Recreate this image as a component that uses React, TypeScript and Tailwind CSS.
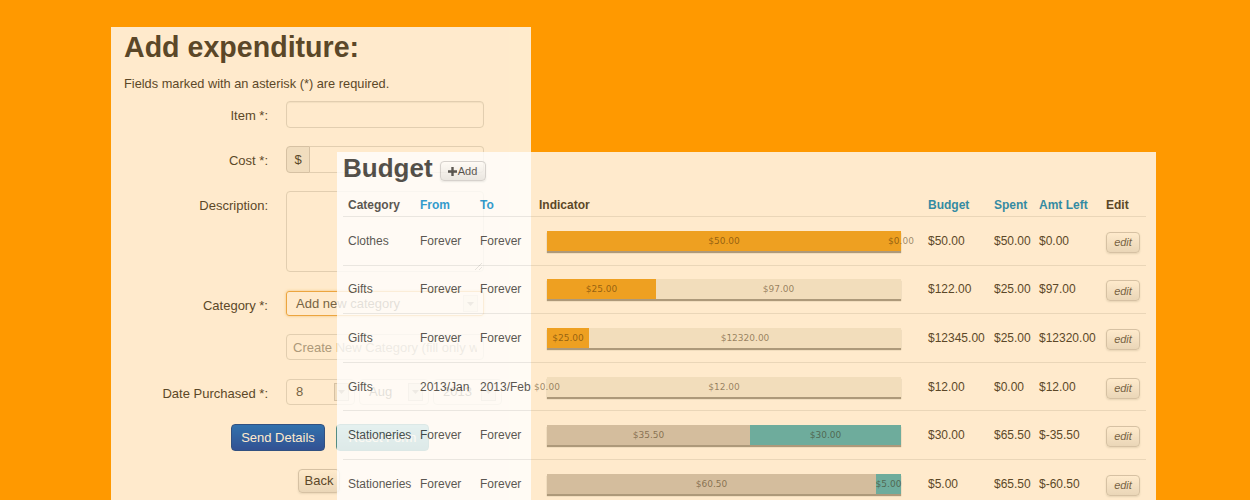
import React from 'react';

type Seg = { w: number; bg: string; label: string };

interface BudgetRow {
  cat: string;
  from: string;
  to: string;
  segs: Seg[];
  budget: string;
  spent: string;
  left: string;
}

const rows: BudgetRow[] = [
  {
    cat: 'Clothes', from: 'Forever', to: 'Forever',
    segs: [
      { w: 354, bg: 'bg-[#eba22a]', label: '$50.00' },
      { w: 0, bg: '', label: '$0.00' },
    ],
    budget: '$50.00', spent: '$50.00', left: '$0.00',
  },
  {
    cat: 'Gifts', from: 'Forever', to: 'Forever',
    segs: [
      { w: 109, bg: 'bg-[#eba22a]', label: '$25.00' },
      { w: 245, bg: '', label: '$97.00' },
    ],
    budget: '$122.00', spent: '$25.00', left: '$97.00',
  },
  {
    cat: 'Gifts', from: 'Forever', to: 'Forever',
    segs: [
      { w: 42, bg: 'bg-[#eba22a]', label: '$25.00' },
      { w: 312, bg: '', label: '$12320.00' },
    ],
    budget: '$12345.00', spent: '$25.00', left: '$12320.00',
  },
  {
    cat: 'Gifts', from: '2013/Jan', to: '2013/Feb',
    segs: [
      { w: 0, bg: '', label: '$0.00' },
      { w: 354, bg: '', label: '$12.00' },
    ],
    budget: '$12.00', spent: '$0.00', left: '$12.00',
  },
  {
    cat: 'Stationeries', from: 'Forever', to: 'Forever',
    segs: [
      { w: 203, bg: 'bg-[#cac7c5]', label: '$35.50' },
      { w: 151, bg: 'bg-[#4ab1c4]', label: '$30.00' },
    ],
    budget: '$30.00', spent: '$65.50', left: '$-35.50',
  },
  {
    cat: 'Stationeries', from: 'Forever', to: 'Forever',
    segs: [
      { w: 329, bg: 'bg-[#cac7c5]', label: '$60.50' },
      { w: 25, bg: 'bg-[#4ab1c4]', label: '$5.00' },
    ],
    budget: '$5.00', spent: '$65.50', left: '$-60.50',
  },
];

function Caret() {
  return (
    <svg width="7" height="4" viewBox="0 0 7 4">
      <path d="M0 0 L7 0 L3.5 4 Z" fill="#999" />
    </svg>
  );
}

function FakeSelect({ text, width }: { text: string; width: string }) {
  return (
    <div className={`${width} h-[26px] border border-[#dcdcdc] rounded-[4px] flex items-center justify-between pl-[9px] pr-[5px] text-[#555]`}>
      <span>{text}</span>
      <span className="w-[15px] h-[18px] bg-[#eee] border border-[#ccc] flex items-center justify-center">
        <Caret />
      </span>
    </div>
  );
}

function FormRow({ label, children, className = '' }: { label: string; children: React.ReactNode; className?: string }) {
  return (
    <div className={`flex items-start gap-[18px] ${className}`}>
      <label className="w-[144px] h-[27px] pt-[2px] flex items-center justify-end">{label}</label>
      {children}
    </div>
  );
}

function Bar({ segs }: { segs: Seg[] }) {
  return (
    <div className="ml-[8px] w-[354px] h-[20px] bg-[#f0eeea] flex shadow-[0_2px_1px_rgba(0,0,0,0.4)]">
      {segs.map((s, i) => (
        <div
          key={i}
          className={`relative h-full shrink-0 ${s.bg}`}
          style={{ width: s.w }}
        >
          <span className="absolute left-1/2 top-0 -translate-x-1/2 leading-[20px] whitespace-nowrap text-[9px] text-black/50 font-['DejaVu_Sans',sans-serif]">
            {s.label}
          </span>
        </div>
      ))}
    </div>
  );
}

const cols = ['w-[72px]', 'w-[60px]', 'w-[59px]', 'w-[389px]', 'w-[66px]', 'w-[45px]', 'w-[67px]', 'w-[45px]'];

export default function App() {
  return (
    <div className="relative w-[1250px] h-[500px] overflow-hidden bg-[#ff9900] font-['Liberation_Sans',Arial,sans-serif] text-[#333]">
      {/* expenditure form */}
      <div className="absolute left-[111px] top-[27px] w-[420px] h-[500px] bg-white opacity-80 px-[13px] pt-[2px] text-[13px]">
        <h2 className="text-[28.6px] leading-[36px] font-bold">Add expenditure:</h2>
        <p className="mt-[10px] leading-[18px] text-[12.8px]">Fields marked with an asterisk (*) are required.</p>

        <div className="mt-[8px] flex flex-col">
          <FormRow label="Item *:">
            <input className="w-[198px] h-[27px] border border-[#dcdcdc] rounded-[4px] shadow-[inset_0_1px_1px_rgba(0,0,0,0.06)]" />
          </FormRow>

          <FormRow label="Cost *:" className="mt-[18px]">
            <div className="flex">
              <span className="w-[24px] h-[27px] bg-[#eee] border border-[#ccc] rounded-l-[4px] flex items-center justify-center">$</span>
              <input className="w-[174px] h-[27px] border border-l-0 border-[#dcdcdc] rounded-r-[4px]" />
            </div>
          </FormRow>

          <FormRow label="Description:" className="mt-[18px]">
            <textarea className="w-[198px] h-[81px] border border-[#dcdcdc] rounded-[4px]" />
          </FormRow>

          <FormRow label="Category *:" className="mt-[19px]">
            <div className="w-[198px] h-[25px] border border-[#e8a94f] rounded-[3px] shadow-[0_0_3px_rgba(232,169,79,0.6)] flex items-center justify-between pl-[9px] pr-[5px] text-[#555]">
              <span>Add new category</span>
              <span className="w-[15px] h-[17px] bg-[#f3f3f3] border border-[#ddd] flex items-center justify-center">
                <Caret />
              </span>
            </div>
          </FormRow>

          <div className="mt-[16px] ml-[162px]">
            <input
              className="w-[198px] h-[26px] border border-[#dcdcdc] rounded-[4px] px-[6px] placeholder:text-[#999]"
              placeholder="Create New Category (fill only when needed)"
            />
          </div>

          <FormRow label="Date Purchased *:" className="mt-[19px]">
            <div className="flex gap-[4px]">
              <FakeSelect text="8" width="w-[69px]" />
              <FakeSelect text="Aug" width="w-[70px]" />
              <FakeSelect text="2013" width="w-[69px]" />
            </div>
          </FormRow>

          <div className="mt-[18px] ml-[107px] flex gap-[11px]">
            <button className="w-[94px] h-[27px] rounded-[4px] text-white bg-gradient-to-b from-[#0068d8] to-[#0040b8] border border-[#0040a0]">
              Send Details
            </button>
            <button className="w-[93px] h-[27px] rounded-[4px] text-white bg-gradient-to-b from-[#5bc0de] to-[#2f96b4] border border-[#2a8aa5]">
              Reset Form
            </button>
          </div>

          <div className="mt-[18px] ml-[174px]">
            <button className="w-[42px] h-[24px] rounded-[4px] bg-gradient-to-b from-white to-[#e6e6e6] border border-[#ccc] shadow-[0_1px_2px_rgba(0,0,0,0.1)]">
              Back
            </button>
          </div>
        </div>
      </div>

      {/* budget panel */}
      <div className="absolute left-[337px] top-[152px] w-[819px] h-[360px] bg-white opacity-80 pl-[6px] pr-[10px] text-[12px]">
        <div className="flex items-start gap-[7px]">
          <h2 className="text-[26px] leading-[32px] font-bold text-[#2a2a2a]">Budget</h2>
          <button className="mt-[9px] w-[46px] h-[20px] rounded-[4px] bg-gradient-to-b from-white to-[#e6e6e6] border border-[#ccc] shadow-[0_1px_2px_rgba(0,0,0,0.1)] flex items-center justify-center gap-[1px] text-[11px]">
            <svg width="9" height="9" viewBox="0 0 9 9">
              <path d="M3.3 0h2.4v3.3H9v2.4H5.7V9H3.3V5.7H0V3.3h3.3z" fill="#333" />
            </svg>
            <span>Add</span>
          </button>
        </div>

        <div className="mt-[8px] h-[25px] pt-[1px] flex items-center border-b border-[#e6e6e6] font-bold">
          {['Category', 'From', 'To', 'Indicator', 'Budget', 'Spent', 'Amt Left', 'Edit'].map((h, i) => (
            <div
              key={h}
              className={`${cols[i]} pl-[5px] ${[1, 2, 4, 5, 6].includes(i) ? 'text-[#0088cc]' : 'text-[#333]'}`}
            >
              {h}
            </div>
          ))}
        </div>

        {rows.map((r, idx) => (
          <div key={idx} className="h-[48.6px] flex items-center border-b border-[#e6e6e6]">
            <div className={`${cols[0]} pl-[5px]`}>{r.cat}</div>
            <div className={`${cols[1]} pl-[5px]`}>{r.from}</div>
            <div className={`${cols[2]} pl-[5px] whitespace-nowrap`}>{r.to}</div>
            <div className={`${cols[3]} pl-[5px]`}>
              <Bar segs={r.segs} />
            </div>
            <div className={`${cols[4]} pl-[5px]`}>{r.budget}</div>
            <div className={`${cols[5]} pl-[5px]`}>{r.spent}</div>
            <div className={`${cols[6]} pl-[5px] whitespace-nowrap`}>{r.left}</div>
            <div className={`${cols[7]} pl-[5px]`}>
              <button className="mt-[3px] w-[34px] h-[21px] rounded-[4px] bg-gradient-to-b from-white to-[#e6e6e6] border border-[#ccc] shadow-[0_1px_2px_rgba(0,0,0,0.12)] text-[11px] italic text-[#555]">
                edit
              </button>
            </div>
          </div>
        ))}
      </div>
    </div>
  );
}
